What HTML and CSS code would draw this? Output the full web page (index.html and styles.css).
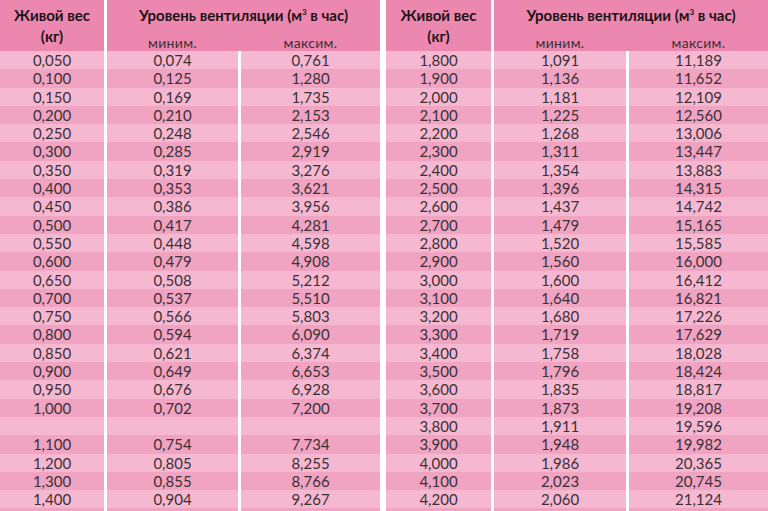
FILE: index.html
```html
<!DOCTYPE html>
<html lang="ru">
<head>
<meta charset="utf-8">
<link rel="stylesheet" href="styles.css">
</head>
<body>
<div class="page">
  <div class="tbl tbl-left">
    <div class="head">
      <div class="h-weight">Живой вес<br>(кг)</div>
      <div class="h-vent">
        <div class="h-title">Уровень вентиляции (м<sup>3</sup> в час)</div>
        <div class="h-sub"><span>миним.</span><span>максим.</span></div>
      </div>
    </div>
    <div class="body">
      <div class="row"><span>0,050</span><span>0,074</span><span>0,761</span></div>
      <div class="row"><span>0,100</span><span>0,125</span><span>1,280</span></div>
      <div class="row"><span>0,150</span><span>0,169</span><span>1,735</span></div>
      <div class="row"><span>0,200</span><span>0,210</span><span>2,153</span></div>
      <div class="row"><span>0,250</span><span>0,248</span><span>2,546</span></div>
      <div class="row"><span>0,300</span><span>0,285</span><span>2,919</span></div>
      <div class="row"><span>0,350</span><span>0,319</span><span>3,276</span></div>
      <div class="row"><span>0,400</span><span>0,353</span><span>3,621</span></div>
      <div class="row"><span>0,450</span><span>0,386</span><span>3,956</span></div>
      <div class="row"><span>0,500</span><span>0,417</span><span>4,281</span></div>
      <div class="row"><span>0,550</span><span>0,448</span><span>4,598</span></div>
      <div class="row"><span>0,600</span><span>0,479</span><span>4,908</span></div>
      <div class="row"><span>0,650</span><span>0,508</span><span>5,212</span></div>
      <div class="row"><span>0,700</span><span>0,537</span><span>5,510</span></div>
      <div class="row"><span>0,750</span><span>0,566</span><span>5,803</span></div>
      <div class="row"><span>0,800</span><span>0,594</span><span>6,090</span></div>
      <div class="row"><span>0,850</span><span>0,621</span><span>6,374</span></div>
      <div class="row"><span>0,900</span><span>0,649</span><span>6,653</span></div>
      <div class="row"><span>0,950</span><span>0,676</span><span>6,928</span></div>
      <div class="row"><span>1,000</span><span>0,702</span><span>7,200</span></div>
      <div class="row"><span></span><span></span><span></span></div>
      <div class="row"><span>1,100</span><span>0,754</span><span>7,734</span></div>
      <div class="row"><span>1,200</span><span>0,805</span><span>8,255</span></div>
      <div class="row"><span>1,300</span><span>0,855</span><span>8,766</span></div>
      <div class="row"><span>1,400</span><span>0,904</span><span>9,267</span></div>
      <div class="row"><span></span><span></span><span></span></div>
    </div>
  </div>
  <div class="tbl tbl-right">
    <div class="head">
      <div class="h-weight">Живой вес<br>(кг)</div>
      <div class="h-vent">
        <div class="h-title">Уровень вентиляции (м<sup>3</sup> в час)</div>
        <div class="h-sub"><span>миним.</span><span>максим.</span></div>
      </div>
    </div>
    <div class="body">
      <div class="row"><span>1,800</span><span>1,091</span><span>11,189</span></div>
      <div class="row"><span>1,900</span><span>1,136</span><span>11,652</span></div>
      <div class="row"><span>2,000</span><span>1,181</span><span>12,109</span></div>
      <div class="row"><span>2,100</span><span>1,225</span><span>12,560</span></div>
      <div class="row"><span>2,200</span><span>1,268</span><span>13,006</span></div>
      <div class="row"><span>2,300</span><span>1,311</span><span>13,447</span></div>
      <div class="row"><span>2,400</span><span>1,354</span><span>13,883</span></div>
      <div class="row"><span>2,500</span><span>1,396</span><span>14,315</span></div>
      <div class="row"><span>2,600</span><span>1,437</span><span>14,742</span></div>
      <div class="row"><span>2,700</span><span>1,479</span><span>15,165</span></div>
      <div class="row"><span>2,800</span><span>1,520</span><span>15,585</span></div>
      <div class="row"><span>2,900</span><span>1,560</span><span>16,000</span></div>
      <div class="row"><span>3,000</span><span>1,600</span><span>16,412</span></div>
      <div class="row"><span>3,100</span><span>1,640</span><span>16,821</span></div>
      <div class="row"><span>3,200</span><span>1,680</span><span>17,226</span></div>
      <div class="row"><span>3,300</span><span>1,719</span><span>17,629</span></div>
      <div class="row"><span>3,400</span><span>1,758</span><span>18,028</span></div>
      <div class="row"><span>3,500</span><span>1,796</span><span>18,424</span></div>
      <div class="row"><span>3,600</span><span>1,835</span><span>18,817</span></div>
      <div class="row"><span>3,700</span><span>1,873</span><span>19,208</span></div>
      <div class="row"><span>3,800</span><span>1,911</span><span>19,596</span></div>
      <div class="row"><span>3,900</span><span>1,948</span><span>19,982</span></div>
      <div class="row"><span>4,000</span><span>1,986</span><span>20,365</span></div>
      <div class="row"><span>4,100</span><span>2,023</span><span>20,745</span></div>
      <div class="row"><span>4,200</span><span>2,060</span><span>21,124</span></div>
      <div class="row"><span></span><span></span><span></span></div>
    </div>
  </div>
</div>
</body>
</html>
```

FILE: styles.css
```css
html, body {
  margin: 0;
  padding: 0;
  background: #ffffff;
  overflow: hidden;
}

.page {
  display: flex;
  gap: 6px;
  width: 768px;
  height: 511px;
  overflow: hidden;
  font-family: Lato, "Open Sans", sans-serif;
}

.tbl {
  display: flex;
  flex-direction: column;
  background: #ffffff;
}

.tbl-left { width: 380px; }
.tbl-right { width: 382px; }

.head {
  display: flex;
  gap: 3px;
  height: 51px;
  flex: none;
}

.h-weight {
  background: #ec87af;
  text-align: center;
  font-weight: 700;
  font-size: 15px;
  line-height: 21px;
  padding-top: 5px;
  color: #1c1418;
  box-sizing: border-box;
}

.h-vent {
  flex: 1;
  background: #ec87af;
  display: flex;
  flex-direction: column;
  justify-content: space-between;
  padding-top: 5px;
  box-sizing: border-box;
}

.h-title {
  text-align: center;
  font-weight: 700;
  font-size: 15px;
  line-height: 21px;
  color: #1c1418;
}

.h-title sup {
  font-size: 8px;
  line-height: 0;
  vertical-align: 6px;
}

.h-sub {
  display: grid;
  column-gap: 3px;
  font-size: 14px;
  line-height: 17px;
  letter-spacing: 0.3px;
  color: #3b2f35;
  text-align: center;
}

.body {
  display: flex;
  flex-direction: column;
}

.row {
  display: grid;
  column-gap: 3px;
  height: 18.3px;
  flex: none;
  font-size: 15px;
  line-height: 18.3px;
  color: #3a3136;
  text-align: center;
}

.tbl-left .h-weight { width: 104px; }
.tbl-left .h-sub { grid-template-columns: 131px 139px; }
.tbl-left .row { grid-template-columns: 104px 131px 139px; }

.tbl-right .h-weight { width: 105px; }
.tbl-right .h-sub { grid-template-columns: 132px 139px; }
.tbl-right .row { grid-template-columns: 105px 132px 139px; }

.row span {
  display: block;
  overflow: hidden;
  white-space: nowrap;
}

.row:nth-child(odd) span { background: #f6b8d1; }
.row:nth-child(even) span { background: #f1a3c2; }
```
